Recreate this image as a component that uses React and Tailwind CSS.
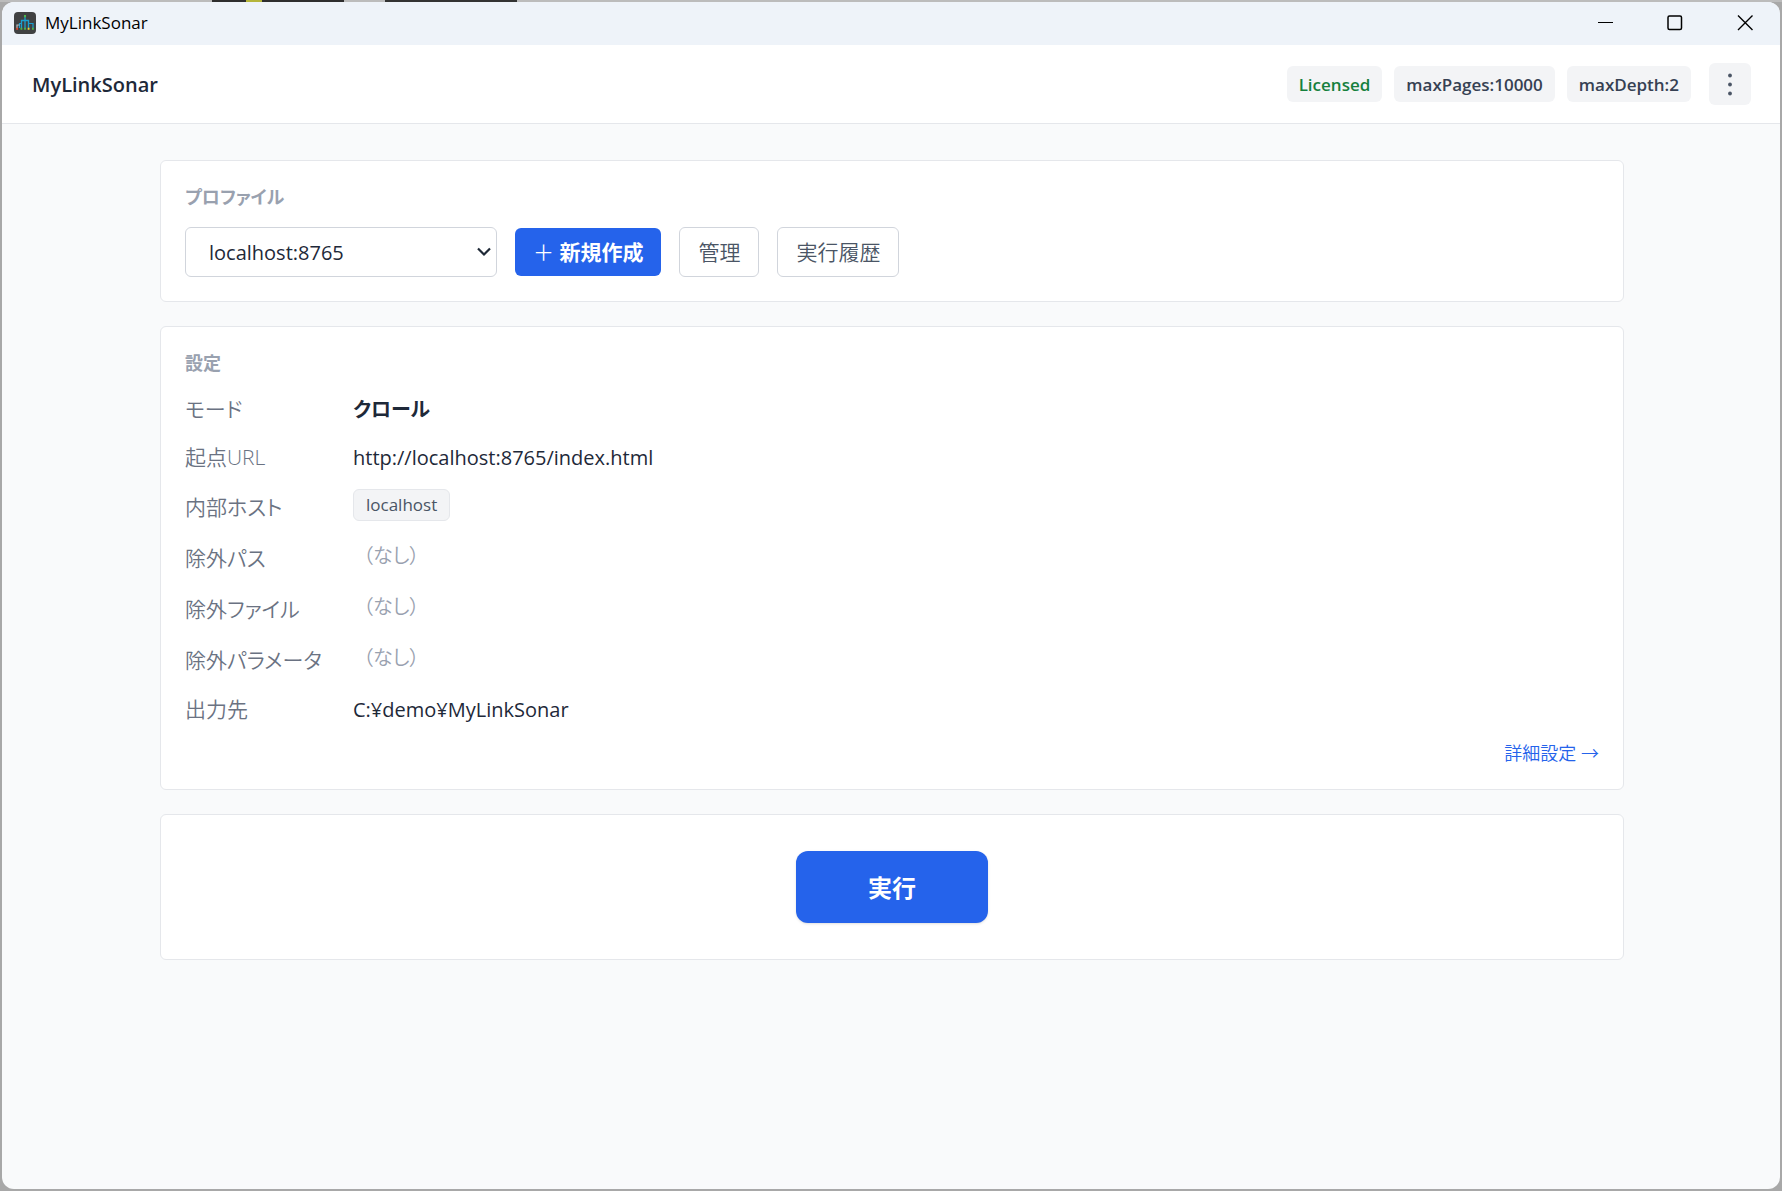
import { useState } from 'react';
import clsx from 'clsx';

const SETTINGS = [
  { label: 'モード', value: 'クロール', type: 'strong' },
  { label: '起点URL', value: 'http://localhost:8765/index.html', type: 'text' },
  { label: '内部ホスト', value: ['localhost'], type: 'tags' },
  { label: '除外パス', value: [], type: 'tags' },
  { label: '除外ファイル', value: [], type: 'tags' },
  { label: '除外パラメータ', value: [], type: 'tags' },
  { label: '出力先', value: 'C:¥demo¥MyLinkSonar', type: 'text' },
];

function AppIcon() {
  return (
    <svg className="size-[22px]" viewBox="0 0 22 22" fill="none" aria-hidden="true">
      <rect width="22" height="22" rx="4" fill="#404142" />
      <path d="M11 5v11.500M7.500 16.500V8.500h7v8" stroke="#1a9fd0" strokeWidth="1.300" />
      <path d="M5.500 16v-4.500h2M14.500 11.500H19V16" stroke="#1a9fd0" strokeWidth="1.200" />
      <path d="M3 16v-3h2.500" stroke="#b9bdbf" strokeWidth="1.200" />
      <path d="M10 3h2v2.200h-2zM6.500 15.800h1.800v2H6.500zM10.100 15.800h1.800v2h-1.800zM18 15.800h1.800v2H18z" fill="#4cb848" />
      <path d="M2.200 15.800H4v2H2.200z" fill="#e0452c" />
      <path d="M13.700 15.800h1.800v2h-1.800z" fill="#f0d52c" />
    </svg>
  );
}

function TitleBar() {
  const control = 'flex w-[70px] items-center justify-center pb-0.5 hover:bg-black/5';
  return (
    <div className="flex h-[43px] items-stretch bg-[#eef3f9] text-black">
      <div className="flex flex-1 items-center gap-[9px] pb-0.5 pl-3">
        <AppIcon />
        <span className="text-[17px] leading-6">MyLinkSonar</span>
      </div>
      <button type="button" aria-label="最小化" className={control}>
        <svg className="size-4" viewBox="0 0 16 16" fill="none" stroke="currentColor" aria-hidden="true">
          <path d="M1 7.500h15" />
        </svg>
      </button>
      <button type="button" aria-label="最大化" className={control}>
        <svg className="size-4" viewBox="0 0 16 16" fill="none" stroke="currentColor" strokeWidth="1.500" aria-hidden="true">
          <rect x="1" y="1" width="13.500" height="13.500" rx="1.500" />
        </svg>
      </button>
      <button type="button" aria-label="閉じる" className={control}>
        <svg className="size-4" viewBox="0 0 16 16" fill="none" stroke="currentColor" strokeWidth="1.400" aria-hidden="true">
          <path d="M1 .5l14.500 14.500M15.500.5L1 15" />
        </svg>
      </button>
    </div>
  );
}

function Badge({ className, children }) {
  return (
    <span className={clsx('rounded-md bg-gray-100 px-3 pt-px text-[17px] font-semibold leading-[35px]', className)}>
      {children}
    </span>
  );
}

function Header() {
  return (
    <header className="flex items-center justify-between border-b border-gray-200 bg-white py-[18px] pl-[30px] pr-[29px]">
      <h1 className="pt-0.5 text-[20px] font-semibold leading-8 text-gray-800">MyLinkSonar</h1>
      <div className="flex items-center gap-3">
        <Badge className="text-[#15803d]">Licensed</Badge>
        <Badge className="text-gray-700">maxPages:10000</Badge>
        <Badge className="text-gray-700">maxDepth:2</Badge>
        <button
          type="button"
          aria-label="メニュー"
          className="ml-1.5 flex size-[42px] items-center justify-center rounded-md bg-gray-100 text-gray-600 hover:bg-gray-200"
        >
          <svg className="h-6 w-1" viewBox="0 0 4 24" fill="currentColor" aria-hidden="true">
            <circle cx="2" cy="3.500" r="1.900" />
            <circle cx="2" cy="12.500" r="1.900" />
            <circle cx="2" cy="21.500" r="1.900" />
          </svg>
        </button>
      </div>
    </header>
  );
}

function Card({ title, className, children }) {
  return (
    <section className={clsx('rounded-md border border-gray-200 bg-white px-6', className)}>
      {title && <h2 className="mb-[18px] text-[18px] font-semibold leading-6 text-gray-400">{title}</h2>}
      {children}
    </section>
  );
}

function ProfileCard() {
  const [profile, setProfile] = useState('localhost:8765');
  const outline =
    'h-[50px] rounded-md border border-gray-300 bg-white px-[18px] pt-0.5 text-[21px] font-[350] text-gray-600 hover:bg-gray-50';
  return (
    <Card title="プロファイル" className="py-6">
      <div className="flex items-center gap-[18px]">
        <div className="relative">
          <select
            aria-label="プロファイル"
            value={profile}
            onChange={(e) => setProfile(e.target.value)}
            className="h-[50px] w-[312px] appearance-none rounded-md border border-gray-300 bg-white pl-[23px] pr-10 pt-0.5 text-[20px] text-gray-800"
          >
            <option>localhost:8765</option>
          </select>
          <svg
            className="pointer-events-none absolute right-1.5 top-5 h-[10px] w-[14px]"
            viewBox="0 0 14 10"
            fill="none"
            stroke="#1f2937"
            strokeWidth="2.200"
            aria-hidden="true"
          >
            <path d="M1 1.500l6 6 6-6" />
          </svg>
        </div>
        <button
          type="button"
          className="h-12 rounded-md bg-[#2563eb] px-[18px] pt-0.5 text-[21px] font-semibold text-white hover:bg-[#1d4ed8]"
        >
          <span className="font-[350]">＋</span> 新規作成
        </button>
        <button type="button" className={outline}>管理</button>
        <button type="button" className={outline}>実行履歴</button>
      </div>
    </Card>
  );
}

function TagList({ items }) {
  if (items.length === 0) {
    return <span className="pl-2.5 text-[20px] font-[350] leading-8 text-gray-400">（なし）</span>;
  }
  return items.map((item) => (
    <span key={item} className="rounded-md border border-gray-200 bg-gray-100 px-3 text-[17px] leading-[30px] text-gray-600">
      {item}
    </span>
  ));
}

function SettingRow({ label, value, type }) {
  const isTags = type === 'tags';
  return (
    <div className={clsx('flex', isTags ? 'h-9' : 'h-[33px]')}>
      <dt
        className={clsx(
          'w-[168px] shrink-0 text-[21px] font-[350] leading-8 text-gray-500',
          isTags ? 'self-center' : 'self-start'
        )}
      >
        {label}
      </dt>
      <dd
        className={clsx(
          'flex text-[20px] leading-8 text-gray-800',
          isTags ? 'self-start' : 'self-end',
          type === 'strong' && 'font-bold'
        )}
      >
        {isTags ? <TagList items={value} /> : value}
      </dd>
    </div>
  );
}

function SettingsCard() {
  return (
    <Card title="設定" className="py-6">
      <dl className="flex flex-col gap-[15px]">
        {SETTINGS.map((row) => (
          <SettingRow key={row.label} {...row} />
        ))}
      </dl>
      <div className="mt-[15px] flex justify-end">
        <a href="#details" className="text-[18px] font-[350] leading-6 text-[#2563eb] hover:underline">
          詳細設定 →
        </a>
      </div>
    </Card>
  );
}

// Slivers of the desktop that stay visible above the window's top edge
function DesktopEdge() {
  return (
    <div className="flex h-[2px] bg-[#bcbcbc]">
      <div className="ml-[212px] w-[34px] bg-[#2e2e2e]" />
      <div className="w-4 bg-[#b5b53a]" />
      <div className="w-[82px] bg-[#2e2e2e]" />
      <div className="ml-[41px] w-[132px] bg-[#333333]" />
    </div>
  );
}

export default function App() {
  return (
    <div className="flex min-h-screen flex-col bg-[#a8a8a8] font-['Open_Sans','Noto_Sans_CJK_JP',sans-serif] [font-feature-settings:'palt']">
      <DesktopEdge />
      <div className="mx-[2px] mb-[2px] flex flex-1 flex-col overflow-hidden rounded-xl bg-[#f9fafb]">
        <TitleBar />
        <Header />
        <main className="flex justify-center py-9 pl-[38px] pr-9">
          <div className="flex w-full max-w-[1464px] flex-col gap-6">
            <ProfileCard />
            <SettingsCard />
            <Card className="flex justify-center py-9">
              <button
                type="button"
                className="h-[72px] w-48 rounded-xl bg-[#2563eb] pt-0.5 text-2xl font-semibold text-white shadow-sm hover:bg-[#1d4ed8]"
              >
                実行
              </button>
            </Card>
          </div>
        </main>
      </div>
    </div>
  );
}
